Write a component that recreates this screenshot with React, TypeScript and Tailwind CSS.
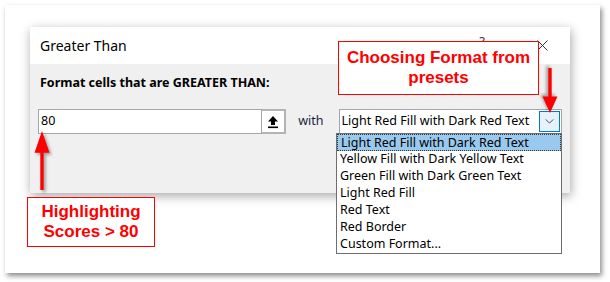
import React from "react";

const PRESETS = [
  "Light Red Fill with Dark Red Text",
  "Yellow Fill with Dark Yellow Text",
  "Green Fill with Dark Green Text",
  "Light Red Fill",
  "Red Text",
  "Red Border",
  "Custom Format...",
];

const ui = { fontFamily: '"Noto Sans", "Open Sans", sans-serif' };
const callout = { fontFamily: '"Liberation Sans", Arial, sans-serif' };

function UploadIcon() {
  return (
    <svg viewBox="0 0 12 14" className="h-[14px] w-[12px]" aria-hidden>
      <path d="M6 1L11 6.5H8V10H4V6.5H1Z" fill="#000" />
      <rect x="1" y="11.5" width="10" height="1.6" fill="#000" />
    </svg>
  );
}

function Arrow({ dir, className }: { dir: "up" | "down"; className: string }) {
  // head on top for "up", flipped for "down"
  return (
    <svg
      viewBox="0 0 16 60"
      preserveAspectRatio="none"
      className={`absolute drop-shadow-[2px_2px_1.5px_rgba(0,0,0,0.35)] ${className} ${
        dir === "down" ? "rotate-180" : ""
      }`}
      aria-hidden
    >
      <path d="M8 0L15.5 22H9.7V60H6.3V22H0.5Z" fill="#ff0000" />
    </svg>
  );
}

export default function App() {
  return (
    <div className="relative h-[282px] w-[610px] overflow-hidden bg-white p-[5px]">
      {/* outer card */}
      <div className="h-[268px] w-[595px] bg-white pt-[22px] pl-[25px] shadow-[2px_3px_5px_rgba(0,0,0,0.45)]">
        {/* dialog */}
        <div className="w-[540px] shadow-[1px_3px_10px_rgba(0,0,0,0.35)]" style={ui}>
          <div className="flex h-[37px] items-center justify-between bg-white pr-[22px] pl-[10px]">
            <span className="text-[14px] text-[#000]">Greater Than</span>
            <div className="flex items-center gap-[52px] text-[#333]">
              <span className="-mt-[8px] text-[13px]">?</span>
              <svg viewBox="0 0 12 12" className="h-[11px] w-[11px]" aria-hidden>
                <path d="M0.5 0.5L11.5 11.5M11.5 0.5L0.5 11.5" stroke="#222" strokeWidth="1" />
              </svg>
            </div>
          </div>
          <div className="h-[129px] bg-[#f0f0f0] px-[8px] pt-[11px]">
            <p className="ml-[2px] text-[12.5px] leading-[16px] font-bold text-black">
              Format cells that are GREATER THAN:
            </p>
            <div className="mt-[18px] flex items-center">
              <div className="flex h-[25px] w-[226px] items-center border border-[#a6a6a6] bg-white pl-[2px] text-[12.5px] text-black">
                80
              </div>
              <div className="grid h-[25px] w-[24px] place-items-center border-2 border-l-0 border-[#b4b4b4] bg-white">
                <UploadIcon />
              </div>
              <span className="ml-[12px] text-[12.5px] text-[#1e1e3c]">with</span>
              <div className="ml-[15px] flex h-[25px] w-[225px] items-center justify-between border border-[#a6a6a6] bg-white pr-[1px] pl-[2px]">
                <span className="text-[12.5px] text-black">{PRESETS[0]}</span>
                <div className="grid h-[21px] w-[21px] place-items-center border border-[#0078d7] bg-[#e5f1fb]">
                  <svg viewBox="0 0 10 6" className="h-[5px] w-[9px]" aria-hidden>
                    <path d="M0.5 0.5L5 5L9.5 0.5" fill="none" stroke="#333" strokeWidth="1" />
                  </svg>
                </div>
              </div>
            </div>
          </div>
        </div>
      </div>

      {/* open dropdown list */}
      <ul
        className="absolute top-[133px] left-[336px] w-[226px] border border-[#6e6e6e] bg-white py-0"
        style={ui}
      >
        {PRESETS.map((p, i) => (
          <li
            key={p}
            className={`h-[17px] px-[3px] text-[12.5px] leading-[16px] text-black ${
              i === 0 ? "border border-dotted border-[#333] bg-[#99c9ef] px-[2px]" : ""
            }`}
          >
            {p}
          </li>
        ))}
      </ul>

      {/* callouts */}
      <div
        className="absolute top-[41px] left-[338px] flex h-[54px] w-[201px] flex-col items-center justify-center border border-[#ff0000] bg-white text-[17px] leading-[20px] font-bold text-[#ff0000]"
        style={callout}
      >
        <span>Choosing Format from</span>
        <span>presets</span>
      </div>
      <div
        className="absolute top-[197px] left-[27px] flex h-[50px] w-[128px] flex-col items-center justify-center border border-[#ff0000] bg-white text-[17px] leading-[20px] font-bold text-[#ff0000]"
        style={callout}
      >
        <span>Highlighting</span>
        <span>Scores &gt; 80</span>
      </div>

      <Arrow dir="up" className="top-[131px] left-[34px] h-[59px] w-[16px]" />
      <Arrow dir="down" className="top-[68px] left-[542px] h-[45px] w-[16px]" />
    </div>
  );
}
